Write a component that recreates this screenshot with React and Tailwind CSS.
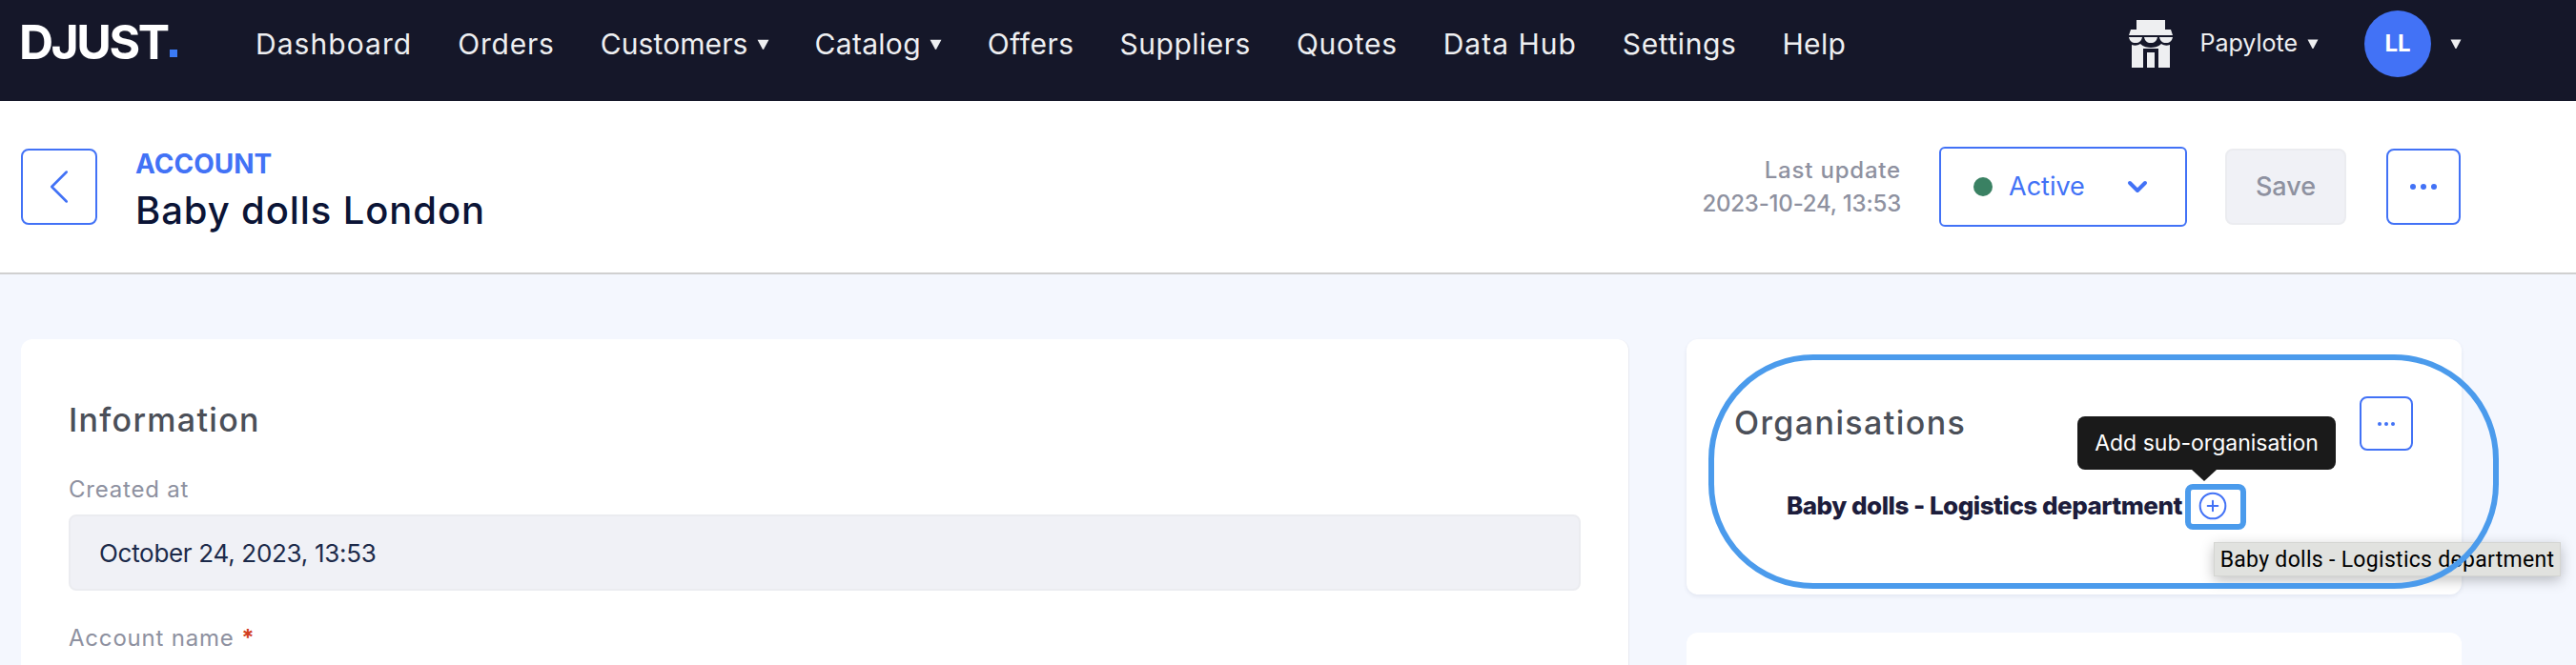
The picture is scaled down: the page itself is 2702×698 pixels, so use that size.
import React from 'react';
import { ChevronLeft, ChevronDown, CirclePlus } from 'lucide-react';

const navItems = [
    { label: 'Dashboard', tracking: 'tracking-[1.05px]' },
    { label: 'Orders', tracking: 'tracking-[0.8px]' },
    { label: 'Customers', tracking: 'tracking-[0.1px]', caret: true },
    { label: 'Catalog', tracking: 'tracking-[0.3px]', caret: true },
    { label: 'Offers', tracking: 'tracking-[0.5px]' },
    { label: 'Suppliers', tracking: 'tracking-[0.5px]' },
    { label: 'Quotes', tracking: 'tracking-[0.7px]' },
    { label: 'Data Hub', tracking: 'tracking-[1px]' },
    { label: 'Settings', tracking: 'tracking-[0.6px]' },
    { label: 'Help', tracking: 'tracking-[0.3px]' },
];

const Caret = ({ className }) => (
    <svg viewBox="0 0 12 10" className={className} fill="currentColor">
        <path d="M0.5 0.5h11L7 9a1 1 0 0 1-2 0z" />
    </svg>
);

const StoreIcon = () => (
    <svg viewBox="0 0 46 50" className="w-[46px] h-[50px] text-[#eeeff1]" fill="currentColor">
        <rect x="8" y="0" width="30" height="10" />
        <path d="M2 10h42l2 6H0z" />
        <path d="M0 18h14c-1 4-3 6-7 6s-6-2-7-6zM16 18h14c-1 4-3 6-7 6s-6-2-7-6zM32 18h14c-1 4-3 6-7 6s-6-2-7-6z" />
        <path fillRule="evenodd" d="M3 26c3 1 6 1 9-1 3 3 8 4 11 4s8-1 11-4c3 2 6 2 9 1v24H3zM15 30v20h16V30zM19 34h8v16h-8z" />
    </svg>
);

const App = () => {
    return (
        <div className="relative w-[2702px] h-[698px] overflow-hidden bg-[#f4f7fe] [font-family:Inter,sans-serif]">
            {/* Top nav */}
            <nav className="h-[106px] bg-[#151729] flex items-start pl-[22px] text-[#eeeff1]">
                <div className="w-[246px] h-[88px] flex items-center shrink-0">
                    <span className="-ml-[2px] text-[50px] leading-none font-bold text-white tracking-[-2.5px]">DJUST</span>
                    <span className="w-2 h-2 bg-[#3b7bf6] mt-[24px] ml-[2px]"></span>
                </div>
                <ul className="flex items-center gap-12 h-[92px] text-[30px]">
                    {navItems.map(item => (
                        <li key={item.label} className={`flex items-center gap-[9px] ${item.tracking}`}>
                            {item.label}
                            {item.caret && <Caret className="w-[13px] h-[11px]" />}
                        </li>
                    ))}
                </ul>
                <div className="ml-auto mr-[120px] h-[92px] flex items-center">
                    <StoreIcon />
                    <span className="ml-[28px] text-[25px]">Papylote</span>
                    <Caret className="ml-[10px] w-[12px] h-[10px]" />
                    <div className="ml-[48px] w-[70px] h-[70px] rounded-full bg-[#4272f6] text-white font-bold text-[24px] flex items-center justify-center">LL</div>
                    <Caret className="ml-[20px] w-[12px] h-[10px]" />
                </div>
            </nav>

            {/* Page header */}
            <header className="h-[182px] bg-white border-b-2 border-[#d0d0d0] flex items-center pl-[22px] pr-[121px]">
                <button className="w-[80px] h-[80px] border-2 border-[#4272f6] rounded-lg flex items-center justify-center text-[#4272f6]">
                    <ChevronLeft className="w-[62px] h-[62px] shrink-0" strokeWidth={1} />
                </button>
                <div className="ml-[40px] mt-[8px]">
                    <div className="text-[28px] leading-[34px] font-bold text-[#4272f6]">ACCOUNT</div>
                    <h1 className="mt-[7px] text-[40px] leading-[50px] font-medium tracking-[0.9px] text-[#0b1436]">Baby dolls London</h1>
                </div>
                <div className="ml-auto text-right text-[24px] leading-[35px] font-medium text-[#8e91a0]">
                    <div className="tracking-[0.8px]">Last update</div>
                    <div className="tracking-[-0.2px]">2023-10-24, 13:53</div>
                </div>
                <button className="ml-[40px] w-[260px] h-[84px] border-2 border-[#4272f6] rounded-md flex items-center pl-[34px] text-[#4272f6] text-[27px]">
                    <span className="w-5 h-5 rounded-full bg-[#3a8163]"></span>
                    <span className="ml-[17px]">Active</span>
                    <ChevronDown className="ml-auto mr-[34px] w-8 h-8" strokeWidth={3} />
                </button>
                <button className="ml-[40px] w-[127px] h-[80px] bg-[#f0f1f6] border-2 border-[#ebecf0] rounded-lg text-[#8e91a0] text-[27px] font-medium">Save</button>
                <button className="ml-[42px] w-[78px] h-[80px] border-2 border-[#4272f6] rounded-lg flex items-center justify-center gap-[5px]">
                    <span className="w-[6px] h-[6px] rounded-full bg-[#4272f6]"></span>
                    <span className="w-[6px] h-[6px] rounded-full bg-[#4272f6]"></span>
                    <span className="w-[6px] h-[6px] rounded-full bg-[#4272f6]"></span>
                </button>
            </header>

            {/* Main content */}
            <main className="flex gap-[60px] px-[22px] pt-[68px]">
                <section className="w-[1687px] h-[400px] bg-white rounded-xl border-r border-[#e8eaf2] px-[50px] pt-[62px]">
                    <h2 className="text-[34px] leading-[46px] font-medium tracking-[1.3px] text-[#4b4f58]">Information</h2>
                    <label className="block mt-[34px] text-[24px] leading-[32px] tracking-[0.8px] text-[#8e91a0]">Created at</label>
                    <div className="mt-[10px] h-[80px] bg-[#f0f1f6] border-2 border-[#ebecf0] rounded-lg flex items-center pl-[30px] text-[26px] tracking-[-0.3px] text-[#1c2a4a]">October 24, 2023, 13:53</div>
                    <label className="block mt-[34px] text-[24px] leading-[32px] tracking-[0.8px] text-[#8e91a0]">Account name <span className="text-[#d2401f] font-bold">*</span></label>
                    <div className="mt-[20px] h-[80px] bg-[#f0f1f6] border-2 border-[#ebecf0] rounded-lg"></div>
                </section>

                <aside className="w-[813px] flex flex-col gap-[40px]">
                    <section className="relative h-[268px] bg-white rounded-xl shadow-[0_2px_4px_rgba(30,40,90,0.08)]">
                        <div className="flex items-start justify-between pl-[50px] pr-[51px] pt-[60px]">
                            <h2 className="text-[34px] leading-[46px] font-medium tracking-[1.4px] text-[#4b4f58] mt-[5px]">Organisations</h2>
                            <button className="w-[56px] h-[57px] border-2 border-[#4272f6] rounded-lg flex items-center justify-center gap-[3px]">
                                <span className="w-1 h-1 rounded-full bg-[#4272f6]"></span>
                                <span className="w-1 h-1 rounded-full bg-[#4272f6]"></span>
                                <span className="w-1 h-1 rounded-full bg-[#4272f6]"></span>
                            </button>
                        </div>
                        <div className="flex items-center pl-[105px] mt-[40px]">
                            <span className="text-[26px] leading-[36px] font-extrabold tracking-[-0.5px] text-[#1d1d3c]">Baby dolls - Logistics department</span>
                            <CirclePlus className="ml-[16px] w-[32px] h-[32px] text-[#4272f6]" strokeWidth={1.5} />
                        </div>

                        {/* Tooltip on the add button */}
                        <div className="absolute left-[410px] top-[81px] w-[271px] h-[56px] bg-[#1a1a1a] rounded-lg flex items-center justify-center text-white text-[23px]">
                            Add sub-organisation
                            <span className="absolute left-[120px] top-[56px] border-x-[13px] border-x-transparent border-t-[12px] border-t-[#1a1a1a]"></span>
                        </div>

                        {/* Highlight around the add button */}
                        <div className="absolute left-[523px] top-[152px] w-[64px] h-[48px] border-[6px] border-[#4b9bec] rounded-lg"></div>

                        {/* Browser title tooltip */}
                        <div className="absolute left-[553px] top-[213px] w-[364px] h-[36px] pt-[2px] bg-[#e1e2df] border border-[#d4d5d2] shadow-[0_4px_14px_rgba(0,0,0,0.25)] flex items-center justify-center text-[23px] tracking-[0.3px] text-black whitespace-nowrap [font-family:Roboto,sans-serif]">
                            Baby dolls - Logistics department
                        </div>

                        {/* Hand-drawn annotation ring */}
                        <div className="absolute left-[23px] top-[16px] w-[829px] h-[246px] border-[6px] border-[#4b9bec] rounded-[110px] pointer-events-none"></div>
                    </section>
                    <section className="h-[100px] bg-white rounded-xl"></section>
                </aside>
            </main>
        </div>
    );
};

export default App;
